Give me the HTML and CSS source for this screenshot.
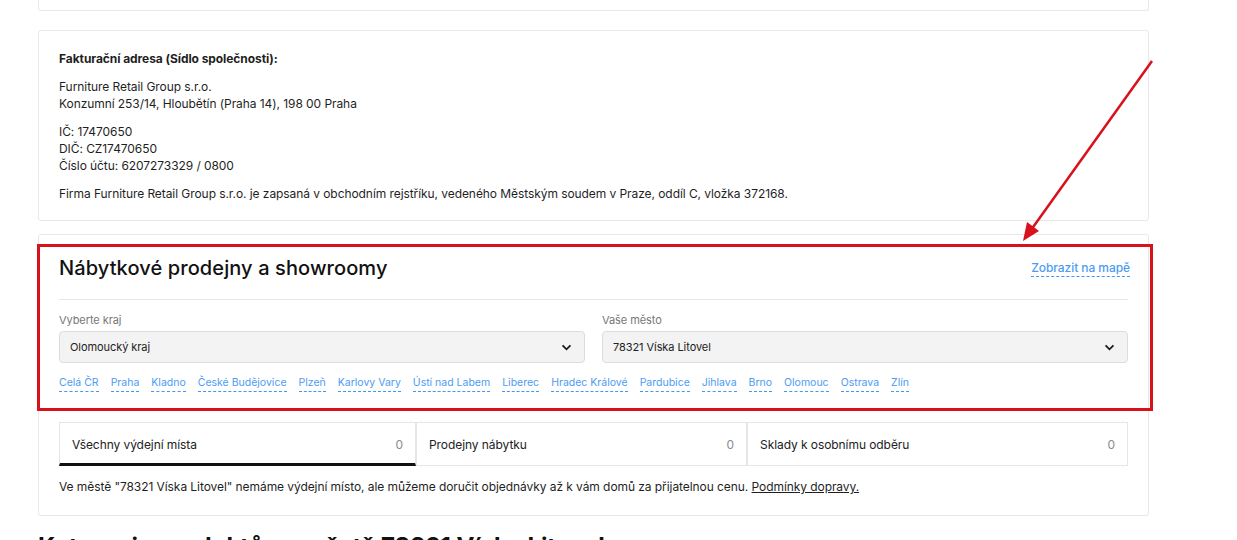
FILE: index.html
```html
<!DOCTYPE html>
<html lang="cs">
<head>
  <meta charset="UTF-8">
  <meta name="viewport" content="width=device-width, initial-scale=1.0">
  <title>Nábytkové prodejny a showroomy</title>
  <link rel="stylesheet" href="styles.css">
</head>
<body>
  <div class="page">
    <div class="card card-stub"></div>

    <div class="card billing">
      <p><strong>Fakturační adresa (Sídlo společnosti):</strong></p>
      <p>Furniture Retail Group s.r.o.<br>Konzumní 253/14, Hloubětín (Praha 14), 198 00 Praha</p>
      <p>IČ: 17470650<br>DIČ: CZ17470650<br>Číslo účtu: 6207273329 / 0800</p>
      <p>Firma Furniture Retail Group s.r.o. je zapsaná v obchodním rejstříku, vedeného Městským soudem v Praze, oddíl C, vložka 372168.</p>
    </div>

    <div class="card stores">
      <div class="stores-head">
        <h2>Nábytkové prodejny a showroomy</h2>
        <a href="#" class="dash-link map-link">Zobrazit na mapě</a>
      </div>

      <div class="filters">
        <div class="field">
          <label for="region">Vyberte kraj</label>
          <div class="select-box" id="region">
            <span>Olomoucký kraj</span>
            <svg class="chevron" viewBox="0 0 12 8" width="11" height="7"><polyline points="1.5,1.5 6,6 10.5,1.5" fill="none" stroke="#1a1a1a" stroke-width="2"/></svg>
          </div>
        </div>
        <div class="field">
          <label for="city">Vaše město</label>
          <div class="select-box" id="city">
            <span>78321 Víska Litovel</span>
            <svg class="chevron" viewBox="0 0 12 8" width="11" height="7"><polyline points="1.5,1.5 6,6 10.5,1.5" fill="none" stroke="#1a1a1a" stroke-width="2"/></svg>
          </div>
        </div>
      </div>

      <div class="city-links">
        <a href="#" class="dash-link">Celá ČR</a>
        <a href="#" class="dash-link">Praha</a>
        <a href="#" class="dash-link">Kladno</a>
        <a href="#" class="dash-link">České Budějovice</a>
        <a href="#" class="dash-link">Plzeň</a>
        <a href="#" class="dash-link">Karlovy Vary</a>
        <a href="#" class="dash-link">Ústí nad Labem</a>
        <a href="#" class="dash-link">Liberec</a>
        <a href="#" class="dash-link">Hradec Králové</a>
        <a href="#" class="dash-link">Pardubice</a>
        <a href="#" class="dash-link">Jihlava</a>
        <a href="#" class="dash-link">Brno</a>
        <a href="#" class="dash-link">Olomouc</a>
        <a href="#" class="dash-link">Ostrava</a>
        <a href="#" class="dash-link">Zlín</a>
      </div>

      <div class="tabs">
        <div class="tab active"><span>Všechny výdejní místa</span><span class="count">0</span></div>
        <div class="tab"><span>Prodejny nábytku</span><span class="count">0</span></div>
        <div class="tab"><span>Sklady k osobnímu odběru</span><span class="count">0</span></div>
      </div>

      <p class="notice">Ve městě "78321 Víska Litovel" nemáme výdejní místo, ale můžeme doručit objednávky až k vám domů za přijatelnou cenu. <a href="#">Podmínky dopravy.</a></p>
    </div>

    <h2 class="section-title">Kategorie produktů ve městě 78321 Víska Litovel</h2>
  </div>

  <!-- annotation overlay -->
  <div class="mark-box"></div>
  <svg class="mark-arrow" width="140" height="190" viewBox="0 0 140 190">
    <line x1="131" y1="1" x2="10" y2="170" stroke="#d8111b" stroke-width="2.5"/>
    <polygon points="2,181 6,162 18,171" fill="#d8111b"/>
  </svg>
</body>
</html>
```

FILE: styles.css
```css
body {
  margin: 0;
  font-family: Inter, "Noto Sans", sans-serif;
  font-size: 12px;
  letter-spacing: -0.07px;
  color: #1f1f1f;
  background-color: #fff;
}
.page {
  width: 1111px;
  margin-left: 38px;
}
.card {
  border: 1px solid #e8e8e8;
  border-radius: 3px;
  background-color: #fff;
  box-sizing: border-box;
}
.card-stub {
  height: 11px;
  border-top: none;
  border-radius: 0 0 3px 3px;
  margin-bottom: 19px;
}
.billing {
  padding: 19px 20px 18px;
  margin-bottom: 13px;
}
.billing p {
  margin: 0 0 11px;
  line-height: 17px;
}
.billing p:last-child {
  margin-bottom: 0;
}
.billing strong {
  font-weight: 700;
}

/* Stores */
.stores {
  padding: 20px 20px 20px;
}
.stores-head {
  display: flex;
  justify-content: space-between;
  align-items: center;
  padding-bottom: 18px;
  border-bottom: 1px solid #e8e8e8;
}
.stores-head h2 {
  margin: 0;
  font-size: 20px;
  line-height: 26px;
  font-weight: 500;
  letter-spacing: 0.1px;
  color: #111;
}
.dash-link {
  color: #4d9cf2;
  text-decoration: none;
  border-bottom: 1px dashed #3f98f5;
  padding-bottom: 1px;
}
.map-link {
  font-size: 12px;
  font-weight: 500;
  margin-right: -2px;
}
.filters {
  display: grid;
  grid-template-columns: 1fr 1fr;
  gap: 17px;
  margin-top: 13px;
}
.field label {
  display: block;
  font-size: 11px;
  line-height: 14px;
  color: #777;
  margin-bottom: 4px;
}
.select-box {
  display: flex;
  justify-content: space-between;
  align-items: center;
  height: 32px;
  padding: 0 10px 0 10px;
  background-color: #f3f3f3;
  border: 1px solid #dcdcdc;
  border-radius: 4px;
  box-sizing: border-box;
  font-size: 11px;
  color: #222;
}
.chevron {
  margin-right: 2px;
}
.city-links {
  display: flex;
  flex-wrap: wrap;
  gap: 12px;
  margin-top: 12px;
  font-size: 10.5px;
  letter-spacing: 0;
  line-height: 15px;
}

/* Tabs */
.tabs {
  display: grid;
  grid-template-columns: 357px 331px 1fr;
  margin-top: 30px;
}
.tab {
  display: flex;
  justify-content: space-between;
  align-items: center;
  height: 44px;
  padding: 0 12px;
  border: 1px solid #e6e6e6;
  box-sizing: border-box;
  background-color: #fff;
  color: #222;
}
.tab.active {
  border-bottom: 3px solid #111;
  padding-top: 2px;
}
.tab .count {
  color: #8a8a8a;
}
.notice {
  margin: 12px 0 0;
  line-height: 17px;
}
.notice a {
  color: #1f1f1f;
  text-decoration: underline;
}
.section-title {
  margin: 16px 0 0;
  font-size: 24px;
  line-height: 30px;
  font-weight: 700;
  color: #111;
}

/* Annotation overlay */
.mark-box {
  position: absolute;
  left: 37px;
  top: 244px;
  width: 1116px;
  height: 167px;
  border: 3px solid #d8111b;
  box-sizing: border-box;
}
.mark-arrow {
  position: absolute;
  left: 1021px;
  top: 60px;
}
```
